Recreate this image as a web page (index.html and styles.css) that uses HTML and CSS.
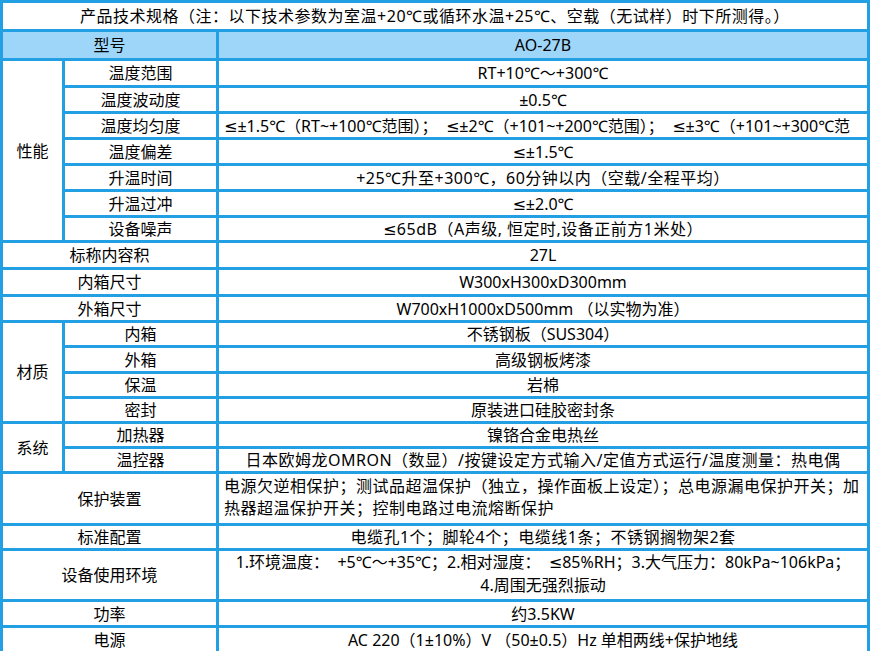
FILE: index.html
```html
<!DOCTYPE html>
<html lang="zh-CN">
<head>
<meta charset="utf-8">
<title>产品技术规格</title>
<link rel="stylesheet" href="styles.css">
</head>
<body>
<table class="spec">
  <colgroup>
    <col class="c1">
    <col class="c2">
    <col class="c3">
  </colgroup>
  <tbody>
    <tr class="h29"><td colspan="3" class="title wide">产品技术规格（注：以下技术参数为室温+20℃或循环水温+25℃、空载（无试样）时下所测得。）</td></tr>
    <tr class="h29 head"><td colspan="2">型号</td><td>AO-27B</td></tr>
    <tr class="h27"><td rowspan="7" class="group">性能</td><td>温度范围</td><td>RT+10℃～+300℃</td></tr>
    <tr class="h26"><td>温度波动度</td><td>±0.5℃</td></tr>
    <tr class="h26"><td>温度均匀度</td><td class="left"><div class="clip">≤±1.5℃（RT~+100℃范围）；&nbsp; ≤±2℃（+101~+200℃范围）；&nbsp; ≤±3℃（+101~+300℃范</div></td></tr>
    <tr class="h26"><td>温度偏差</td><td>≤±1.5℃</td></tr>
    <tr class="h26"><td>升温时间</td><td class="wide">+25℃升至+300℃，60分钟以内（空载/全程平均）</td></tr>
    <tr class="h26"><td>升温过冲</td><td>≤±2.0℃</td></tr>
    <tr class="h25"><td>设备噪声</td><td class="wide">≤65dB（A声级, 恒定时,设备正前方1米处）</td></tr>
    <tr class="h27"><td colspan="2">标称内容积</td><td>27L</td></tr>
    <tr class="h27"><td colspan="2">内箱尺寸</td><td>W300xH300xD300mm</td></tr>
    <tr class="h26"><td colspan="2">外箱尺寸</td><td>W700xH1000xD500mm （以实物为准）</td></tr>
    <tr class="h25"><td rowspan="4" class="group">材质</td><td>内箱</td><td>不锈钢板（SUS304）</td></tr>
    <tr class="h26"><td>外箱</td><td>高级钢板烤漆</td></tr>
    <tr class="h25"><td>保温</td><td>岩棉</td></tr>
    <tr class="h23"><td>密封</td><td>原装进口硅胶密封条</td></tr>
    <tr class="h24"><td rowspan="2" class="group">系统</td><td>加热器</td><td>镍铬合金电热丝</td></tr>
    <tr class="h25"><td>温控器</td><td class="wide">日本欧姆龙OMRON（数显）/按键设定方式输入/定值方式运行/温度测量：热电偶</td></tr>
    <tr class="h52"><td colspan="2">保护装置</td><td class="left wide prot">电源欠逆相保护；测试品超温保护（独立，操作面板上设定）；总电源漏电保护开关；加<br>热器超温保护开关；控制电路过电流熔断保护</td></tr>
    <tr class="h25"><td colspan="2">标准配置</td><td class="wide">电缆孔1个；脚轮4个；电缆线1条；不锈钢搁物架2套</td></tr>
    <tr class="h51"><td colspan="2">设备使用环境</td><td class="env">1.环境温度：&nbsp; +5℃～+35℃；2.相对湿度：&nbsp; ≤85%RH；3.大气压力：80kPa~106kPa；<br>4.周围无强烈振动</td></tr>
    <tr class="h26"><td colspan="2">功率</td><td>约3.5KW</td></tr>
    <tr class="h27"><td colspan="2">电源</td><td>AC 220（1±10%）V （50±0.5）Hz 单相两线+保护地线</td></tr>
  </tbody>
</table>
</body>
</html>
```

FILE: styles.css
```css
html, body {
  margin: 0;
  padding: 0;
  background: #ffffff;
}

body {
  font-family: "Noto Sans", "DejaVu Sans", "Noto Sans CJK SC", sans-serif;
  font-size: 16px;
  color: #000;
}

.spec {
  width: 870px;
  table-layout: fixed;
  border-collapse: collapse;
}

.spec .c1 { width: 62px; }
.spec .c2 { width: 154px; }

.spec td {
  border: 3px solid #22a0e3;
  padding: 0 5px;
  text-align: center;
  vertical-align: middle;
  line-height: 22px;
  white-space: nowrap;
  overflow: hidden;
}

.spec .head td {
  background: #9ed6fa;
}

.spec td.left {
  text-align: left;
}

.spec td.wide {
  letter-spacing: 0.5px;
}

.spec td.prot {
  line-height: 22px;
  padding-bottom: 3px;
}

.spec td.env {
  line-height: 23px;
  padding-bottom: 2px;
}

.clip {
  overflow: hidden;
  white-space: nowrap;
}

.h23 { height: 23px; }
.h24 { height: 24px; }
.h25 { height: 25px; }
.h26 { height: 26px; }
.h27 { height: 27px; }
.h29 { height: 29px; }
.h51 { height: 51px; }
.h52 { height: 52px; }
```
